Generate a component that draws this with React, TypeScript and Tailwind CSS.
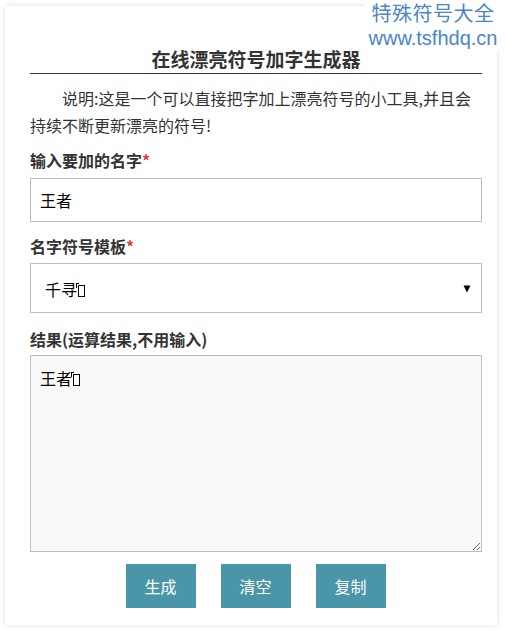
import React from "react";

const cjk = { fontFamily: '"Microsoft YaHei", "Noto Sans CJK SC", "Noto Sans", sans-serif' };

function Tofu() {
  return (
    <span className="relative inline-block w-[7px] h-[12px] border border-black ml-[1px] align-[-1px]">
      <span className="absolute left-[-3px] top-[-3px] w-[3px] h-[5px] border-l border-t border-black" />
    </span>
  );
}

export default function App() {
  return (
    <div className="relative w-[506px] h-[632px] bg-white overflow-hidden" style={cjk}>
      <div className="ml-[5px] mt-[6px] w-[492px] h-[619px] bg-white shadow-[0_0_6px_rgba(0,0,0,0.13)] pt-[39px] pl-[25px] pr-[15px]">
        <h1 className="h-[29px] leading-[28px] text-[19px] font-bold text-[#333] text-center border-b border-[#333]">
          在线漂亮符号加字生成器
        </h1>
        <p className="mt-[11px] text-[16px] leading-[27px] text-[#333] indent-[32px]">
          说明:这是一个可以直接把字加上漂亮符号的小工具,并且会持续不断更新漂亮的符号!
        </p>
        <div className="mt-[9px] text-[16px] leading-[24px] font-bold text-[#333]">
          输入要加的名字<span className="text-[#e4393c]">*</span>
        </div>
        <div className="mt-[6px] h-[44px] border border-[#bdbdbd] pl-[9px] flex items-center text-[16px] text-black">
          王者
        </div>
        <div className="mt-[12px] text-[16px] leading-[24px] font-bold text-[#333]">
          名字符号模板<span className="text-[#e4393c]">*</span>
        </div>
        <div className="mt-[5px] h-[50px] border border-[#bdbdbd] pl-[14px] pr-[10px] flex items-center justify-between text-[16px] text-black">
          <span className="pt-[2px]">
            千寻
            <Tofu />
          </span>
          <svg width="8" height="8" viewBox="0 0 8 8" className="mt-[2px]">
            <polygon points="0.5,0.5 7.5,0.5 4,7.5" fill="#000" />
          </svg>
        </div>
        <div className="mt-[14px] text-[16px] leading-[24px] font-bold text-[#333]">
          结果(运算结果,不用输入)
        </div>
        <div className="mt-[4px] h-[197px] border border-[#bdbdbd] bg-[#f9f9f9] pl-[9px] pt-[10px] text-[16px] leading-[24px] text-black resize overflow-auto">
          王者
          <Tofu />
        </div>
        <div className="mt-[12px] flex justify-center gap-[25px] pr-[1px]">
          <button className="w-[70px] h-[44px] bg-[#4996a8] text-white text-[16px]">生成</button>
          <button className="w-[70px] h-[44px] bg-[#4996a8] text-white text-[16px]">清空</button>
          <button className="w-[70px] h-[44px] bg-[#4996a8] text-white text-[16px]">复制</button>
        </div>
      </div>
      <div className="absolute left-[364px] top-0 w-[138px] h-[52px] bg-white text-center text-[#4a86c8] text-[20px] leading-[26px]">
        <div className="tracking-[0.5px]">特殊符号大全</div>
        <div className="-mt-[1px]" style={{ fontFamily: '"Liberation Sans", Arial, sans-serif' }}>www.tsfhdq.cn</div>
      </div>
    </div>
  );
}
